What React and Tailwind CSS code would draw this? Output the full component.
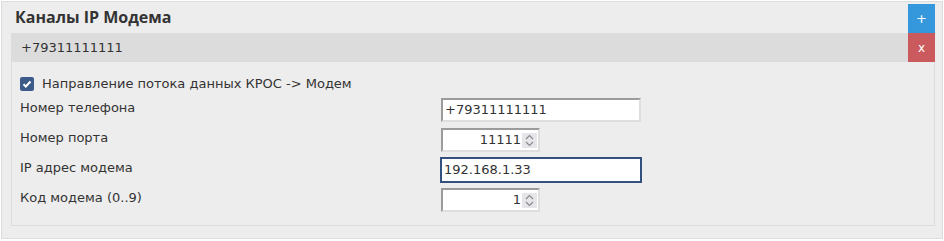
import { useState } from 'react';

const body = "font-['DejaVu_Sans',sans-serif]";

function Spinner() {
  return (
    <div className="flex h-[15px] w-[15px] flex-col items-center justify-center bg-[#e6e6ea]">
      <svg width="9" height="13" viewBox="0 0 9 13" fill="none" stroke="#8a8a8a" strokeWidth="1.2">
        <path d="M1 5l3.5-3.5L8 5" />
        <path d="M1 8l3.5 3.5L8 8" />
      </svg>
    </div>
  );
}

function TextBox({ value, width, focused }) {
  return (
    <div
      className={`flex h-[24px] items-center bg-white px-[2px] text-[13px] text-[#333] ${width} ${
        focused
          ? 'h-[26px] border-2 border-[#34507f] -mx-[1px] -mt-[1px]'
          : 'border-2 border-t-[#9b9b9b] border-l-[#9b9b9b] border-b-[#dedede] border-r-[#dedede]'
      }`}
    >
      {value}
    </div>
  );
}

function NumberBox({ value }) {
  return (
    <div className="flex h-[24px] w-[99px] items-center justify-end gap-[1px] border-2 border-t-[#9b9b9b] border-l-[#9b9b9b] border-b-[#dedede] border-r-[#dedede] bg-white pr-[1px] text-[13px] text-[#333]">
      <span>{value}</span>
      <Spinner />
    </div>
  );
}

export default function App() {
  const [checked] = useState(true);

  const rows = [
    { label: 'Номер телефона', field: <TextBox value="+79311111111" width="w-[200px]" /> },
    { label: 'Номер порта', field: <NumberBox value="11111" /> },
    { label: 'IP адрес модема', field: <TextBox value="192.168.1.33" width="w-[202px]" focused /> },
    { label: 'Код модема (0..9)', field: <NumberBox value="1" /> },
  ];

  return (
    <div className={`h-[241px] w-[944px] bg-white ${body}`}>
      <div className="ml-[1px] mt-[1px] h-[238px] w-[942px] border border-[#dcdcdc] bg-[#ededed]">
        <div className="flex">
          <div className="flex-1 pl-[13px] pt-[2px] font-['Open_Sans',sans-serif] text-[16px] font-bold leading-[26px] text-[#333]">
            Каналы IP Модема
          </div>
          <button className="mr-[7px] mt-[2px] flex h-[29px] w-[27px] items-center justify-center bg-[#3598dc] text-[13px] text-white">
            +
          </button>
        </div>
        <div className="ml-[9px] mr-[7px] flex">
          <div className="flex h-[29px] flex-1 items-center bg-[#dcdcdc] pl-[10px] text-[13px] text-[#333]">
            +79311111111
          </div>
          <button className="flex h-[29px] w-[27px] items-center justify-center bg-[#cb5a5e] text-[12px] text-white">
            x
          </button>
        </div>
        <div className="ml-[9px] mr-[7px] h-[164px] border border-t-0 border-[#dcdcdc] px-[8px] pt-[14px]">
          <div className="flex h-[16px] items-center gap-[8px] text-[13px] text-[#333]">
            <span className="flex h-[14px] w-[14px] items-center justify-center rounded-[2px] bg-[#3d5a88]">
              {checked && (
                <svg width="10" height="10" viewBox="0 0 10 10" fill="none" stroke="white" strokeWidth="2">
                  <path d="M1.5 5.2l2.3 2.3L8.5 2.5" />
                </svg>
              )}
            </span>
            Направление потока данных КРОС -&gt; Модем
          </div>
          <div className="mt-[2px] flex flex-col gap-[6px]">
            {rows.map((r) => (
              <div key={r.label} className="flex h-[24px] items-start">
                <div className="mt-[6px] w-[421px] text-[13px] leading-[16px] text-[#333]">{r.label}</div>
                <div className="mt-[4px]">{r.field}</div>
              </div>
            ))}
          </div>
        </div>
      </div>
    </div>
  );
}
